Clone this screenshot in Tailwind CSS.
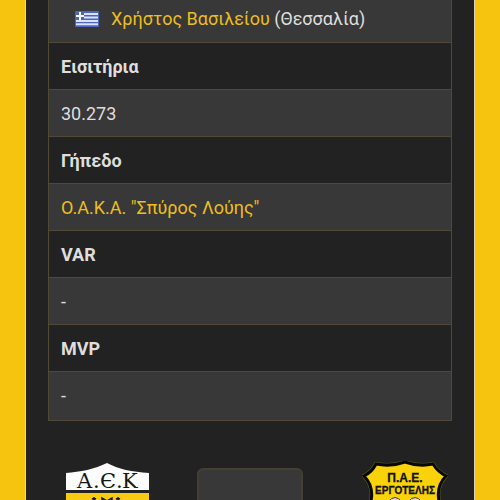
<!DOCTYPE html>
<html lang="el">

<head>
    <meta charset="UTF-8">
    <meta name="viewport" content="width=device-width, initial-scale=1.0">
    <title>ΑΕΚ - Εργοτέλης</title>
    <script src="https://cdn.jsdelivr.net/npm/@tailwindcss/browser@4"></script>
</head>

<body class="h-screen overflow-hidden bg-[#f6c40f] px-[25px] font-['Roboto','Noto_Sans',sans-serif] text-lg text-[#dedede]">
    <main class="h-full overflow-hidden border-x border-[#e3d5ae] bg-[#222222] px-[22px]">
        <!-- match details -->
        <table class="w-full border-collapse border-x border-b border-[#514935] text-left leading-6">
            <tbody>
                <tr class="h-[42px] border-b border-[#514935] bg-[#383838]">
                    <td class="px-3 pb-1">
                        <div class="flex items-center pl-[14px]">
                            <svg class="mr-3 h-4 w-6" viewBox="0 0 24 16" role="img" aria-label="Ελλάδα">
                                <rect width="24" height="16" rx="1" fill="#4c66bd" />
                                <path d="M9 3h14M9 6.5h14M1 10h22M1 13.2h22" stroke="#d9e2f8" stroke-width="2" />
                                <path d="M5 1v8M1 5h8" stroke="#f4f7ff" stroke-width="2" />
                            </svg>
                            <p><a href="#" class="text-[#edbe20]">Χρήστος Βασιλείου</a> (Θεσσαλία)</p>
                        </div>
                    </td>
                </tr>
                <tr class="h-[47px] border-b border-[#514935]">
                    <th class="px-3 pt-0.5 font-bold">Εισιτήρια</th>
                </tr>
                <tr class="h-[47px] border-b border-[#514935] bg-[#383838]">
                    <td class="px-3 pt-0.5">30.273</td>
                </tr>
                <tr class="h-[47px] border-b border-[#514935]">
                    <th class="px-3 pt-0.5 font-bold">Γήπεδο</th>
                </tr>
                <tr class="h-[47px] border-b border-[#514935] bg-[#383838]">
                    <td class="px-3 pt-0.5"><a href="#" class="text-[#edbe20]">Ο.Α.Κ.Α. "Σπύρος Λούης"</a></td>
                </tr>
                <tr class="h-[47px] border-b border-[#514935]">
                    <th class="px-3 pt-0.5 font-bold">VAR</th>
                </tr>
                <tr class="h-[47px] border-b border-[#514935] bg-[#383838]">
                    <td class="px-3 pt-0.5">-</td>
                </tr>
                <tr class="h-[47px] border-b border-[#514935]">
                    <th class="px-3 pt-0.5 font-bold">MVP</th>
                </tr>
                <tr class="h-[49px] bg-[#383838]">
                    <td class="px-3">-</td>
                </tr>
            </tbody>
        </table>

        <!-- teams and score -->
        <section class="mt-10 grid grid-cols-[1fr_106px_1fr] items-start">
            <svg class="mt-0.5 ml-4 h-24 w-[86px]" viewBox="0 0 86 96" role="img" aria-label="ΑΕΚ">
                <path d="M2 10C16 9 31 6 43 0C54 6 68 9 85 10V27H2Z" fill="#fdfdfd" />
                <path d="M2 30H85V62C85 77 62 86 43 95C22 86 2 77 2 62Z" fill="#f8cb13" />
                <g fill="#161616" font-family="DejaVu Serif, serif" font-size="21">
                    <text x="13" y="25">Α</text>
                    <text x="29" y="25">.</text>
                    <text x="36" y="25">Є</text>
                    <text x="52" y="25">.</text>
                    <text x="58" y="25">Κ</text>
                </g>
                <path d="M28 36l2-1 2 1M30 34v4M38 39v-4l5 3 5-3v4M52 36l2-1 2 1M54 34v4" fill="none" stroke="#161616" stroke-width="1.5" />
            </svg>
            <div class="mt-[7px] h-24 rounded-md border-2 border-[#453f32] bg-[#383838]"></div>
            <svg class="mr-1 h-24 w-[86px] justify-self-end" viewBox="0 0 86 96" role="img" aria-label="Π.Α.Ε. Εργοτέλης">
                <path d="M14 3Q29 6 43 1Q57 6 71 3Q76 11 84 15Q74 25 77 40C79 68 62 82 43 94C24 82 7 68 9 40Q12 25 2 15Q10 11 14 3Z" fill="#fad20a" stroke="#5d5e20" stroke-width="4" />
                <path d="M14 3Q29 6 43 1Q57 6 71 3Q76 11 84 15Q74 25 77 40C79 68 62 82 43 94C24 82 7 68 9 40Q12 25 2 15Q10 11 14 3Z" fill="#fad20a" stroke="#080808" stroke-width="3" />
                <g fill="#111111" stroke="#111111" stroke-width="0.3" font-family="Liberation Sans, sans-serif" font-weight="bold" text-anchor="middle">
                    <text x="43" y="21" font-size="12">Π.Α.Ε.</text>
                    <text x="43" y="33" font-size="10">ΕΡΓΟΤΕΛΗΣ</text>
                </g>
                <path d="M26 41Q33 32 40 41M46 41Q53 32 60 41" fill="#d9d9c8" stroke="#44412a" />
            </svg>
        </section>
    </main>
</body>

</html>
